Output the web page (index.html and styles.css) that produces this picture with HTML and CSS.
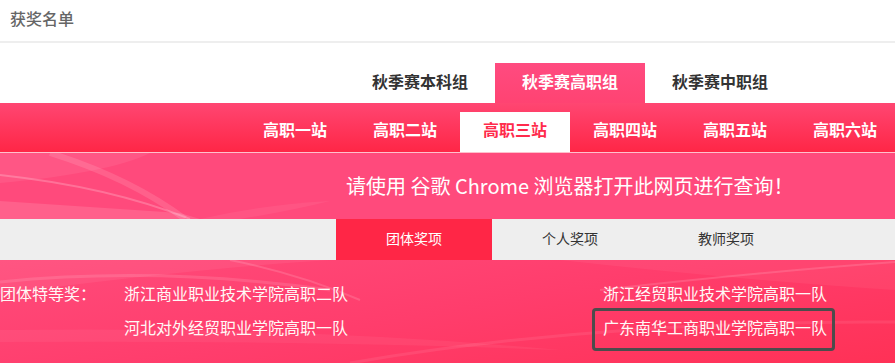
FILE: index.html
```html
<!DOCTYPE html>
<html lang="zh-CN">
<head>
<meta charset="utf-8">
<title>获奖名单</title>
<link rel="stylesheet" href="styles.css">
</head>
<body>
<div class="page">
  <header class="title-bar">
    <h1 class="title">获奖名单</h1>
  </header>

  <nav class="season-tabs">
    <a class="season-tab">秋季赛本科组</a>
    <a class="season-tab active">秋季赛高职组</a>
    <a class="season-tab">秋季赛中职组</a>
  </nav>

  <nav class="station-bar">
    <a class="station">高职一站</a>
    <a class="station">高职二站</a>
    <a class="station active">高职三站</a>
    <a class="station">高职四站</a>
    <a class="station">高职五站</a>
    <a class="station">高职六站</a>
  </nav>

  <section class="notice">
    <svg class="notice-bg" width="895" height="66" viewBox="0 0 895 66" preserveAspectRatio="none" aria-hidden="true">
      <path d="M0 0 L150 0 Q110 20 0 30 Z" fill="#ffffff" opacity="0.07"/>
      <path d="M0 22 Q110 34 190 66" stroke="#ffffff" stroke-opacity="0.22" stroke-width="2" fill="none"/>
      <path d="M50 0 Q130 25 185 66" stroke="#ffffff" stroke-opacity="0.12" stroke-width="6" fill="none"/>
      <path d="M0 48 Q90 54 180 60 L200 66 L0 66 Z" fill="#ffffff" opacity="0.12"/>
      <path d="M200 66 Q260 52 330 48 Q290 58 240 66 Z" fill="#ffffff" opacity="0.06"/>
    </svg>
    <p class="notice-text">请使用 谷歌 Chrome 浏览器打开此网页进行查询！</p>
  </section>

  <nav class="award-tabs">
    <a class="award-tab active">团体奖项</a>
    <a class="award-tab">个人奖项</a>
    <a class="award-tab">教师奖项</a>
  </nav>

  <section class="results">
    <svg class="results-bg" width="895" height="103" viewBox="0 0 895 103" preserveAspectRatio="none" aria-hidden="true">
      <path d="M0 0 L330 0 Q200 8 0 34 Z" fill="#ffffff" opacity="0.06"/>
      <path d="M0 22 Q160 6 330 30" stroke="#ffffff" stroke-opacity="0.12" stroke-width="3" fill="none"/>
      <path d="M230 0 Q300 14 360 40" stroke="#ffffff" stroke-opacity="0.14" stroke-width="2" fill="none"/>
      <path d="M600 30 Q760 12 895 2" stroke="#ffffff" stroke-opacity="0.14" stroke-width="2" fill="none"/>
      <path d="M560 0 Q740 20 895 30 L895 0 Z" fill="#ffffff" opacity="0.05"/>
      <path d="M0 70 Q300 66 560 90 Q300 80 0 82 Z" fill="#ffffff" opacity="0.05"/>
      <path d="M350 103 Q600 60 895 62" stroke="#ffffff" stroke-opacity="0.08" stroke-width="3" fill="none"/>
    </svg>
    <div class="result-grid">
      <span class="result-label">团体特等奖：</span>
      <span class="result-name">浙江商业职业技术学院高职二队</span>
      <span class="result-name">浙江经贸职业技术学院高职一队</span>
      <span class="result-label"></span>
      <span class="result-name">河北对外经贸职业学院高职一队</span>
      <span class="result-name boxed">广东南华工商职业学院高职一队</span>
    </div>
  </section>
</div>
</body>
</html>
```

FILE: styles.css
```css
html, body {
  margin: 0;
  padding: 0;
  background: #ffffff;
  overflow: hidden;
}

body {
  font-family: "Noto Sans CJK SC", "Microsoft YaHei", sans-serif;
}

.page {
  width: 895px;
}

a {
  text-decoration: none;
  cursor: pointer;
}

/* header */
.title-bar {
  height: 43px;
  box-sizing: border-box;
  border-bottom: 2px solid #eeeeee;
  padding-left: 10px;
  padding-top: 8px;
}

.title {
  margin: 0;
  font-size: 16px;
  line-height: 20px;
  font-weight: 500;
  color: #666666;
}

/* season tabs */
.season-tabs {
  display: flex;
  justify-content: flex-end;
  padding-right: 100px;
  margin-top: 20px;
}

.season-tab {
  width: 150px;
  height: 40px;
  line-height: 36px;
  text-align: center;
  font-size: 16px;
  font-weight: bold;
  color: #333333;
}

.season-tab.active {
  background: linear-gradient(#ff4b80, #ff4372);
  color: #ffffff;
}

/* stations */
.station-bar {
  height: 49px;
  background: linear-gradient(#ff4672, #ff2646);
  border-bottom: 1px solid #ffc0cc;
  display: flex;
  justify-content: flex-end;
  align-items: flex-end;
  margin-right: -5px;
}

.station {
  width: 110px;
  height: 40px;
  line-height: 34px;
  text-align: center;
  font-size: 16px;
  font-weight: bold;
  color: #ffffff;
}

.station.active {
  background: #ffffff;
  color: #ff2b4c;
}

/* notice banner */
.notice {
  position: relative;
  height: 66px;
  background: #ff4a7c;
  display: flex;
  align-items: center;
  padding-left: 346px;
  overflow: hidden;
}

.notice-bg {
  position: absolute;
  left: 0;
  top: 0;
}

.notice-text {
  position: relative;
  margin: 0;
  font-size: 20px;
  line-height: 26px;
  color: #ffffff;
}

/* award tabs */
.award-tabs {
  height: 41px;
  background: #eeeeee;
  display: flex;
  justify-content: flex-end;
  padding-right: 91px;
}

.award-tab {
  width: 156px;
  line-height: 38px;
  text-align: center;
  font-size: 14px;
  color: #333333;
}

.award-tab.active {
  background: #ff2646;
  color: #ffffff;
}

/* results */
.results {
  position: relative;
  height: 103px;
  box-sizing: border-box;
  padding-top: 16px;
  background: linear-gradient(170deg, #ff4b7b 0%, #ff3d6c 50%, #ff3156 100%);
  overflow: hidden;
}

.results-bg {
  position: absolute;
  left: 0;
  top: 0;
}

.result-grid {
  position: relative;
  display: grid;
  grid-template-columns: 124px 479px auto;
  grid-auto-rows: 34px;
  align-items: center;
  font-size: 16px;
  color: #fff8f6;
}

.result-name,
.result-label {
  line-height: 22px;
  white-space: nowrap;
}

.result-name.boxed {
  position: relative;
  justify-self: start;
}

.result-name.boxed::after {
  content: "";
  position: absolute;
  left: -11px;
  right: -8px;
  top: -8px;
  bottom: -13px;
  border: 3px solid #4c4c4c;
  border-radius: 4px;
}
```
